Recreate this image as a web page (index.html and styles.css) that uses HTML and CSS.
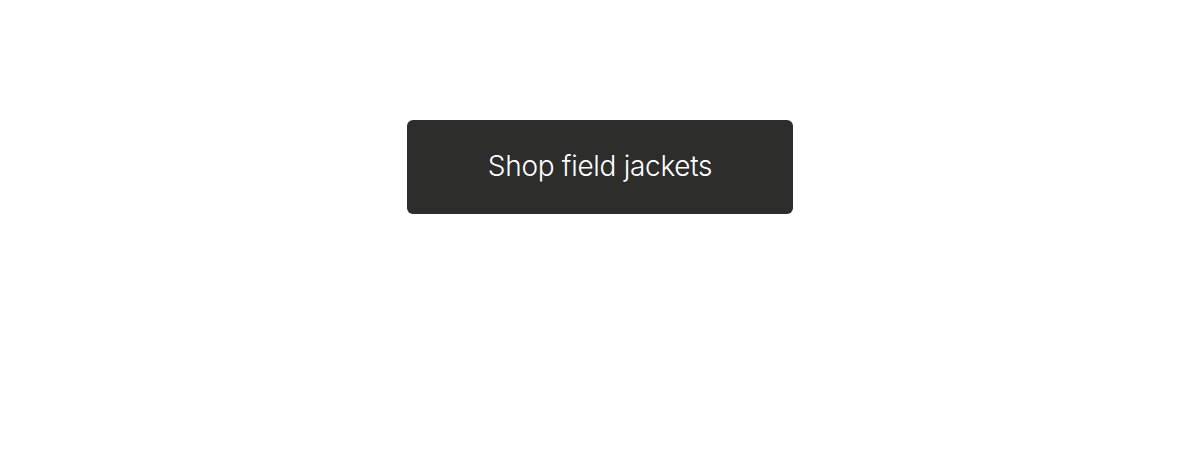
FILE: index.html
```html
<!DOCTYPE html>
<html lang="en">
<head>
    <meta charset="UTF-8">
    <meta name="viewport" content="width=device-width, initial-scale=1.0">
    <title>Field jackets</title>
    <link rel="stylesheet" href="styles.css">
</head>
<body>
    <div class="cta">
        <a class="cta-button" href="#">Shop field jackets</a>
    </div>
</body>
</html>
```

FILE: styles.css
```css
body { margin: 0; background: #fff; font-family: Inter, "Liberation Sans", sans-serif; }
.cta { display: flex; justify-content: center; padding-top: 120px; }
.cta-button { display: flex; align-items: center; justify-content: center; width: 386px; height: 94px; box-sizing: border-box; padding-bottom: 3px; background-color: #2d2d2b; color: #fff; border-radius: 6px; font-size: 28px; font-weight: 300; letter-spacing: -0.3px; text-decoration: none; }
```
